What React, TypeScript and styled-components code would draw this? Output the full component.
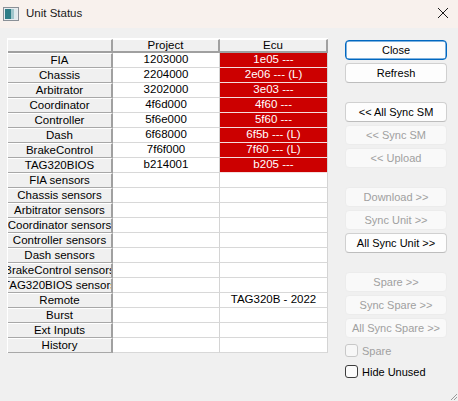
import React from "react";
import styled, { createGlobalStyle, css } from "styled-components";

const GlobalStyle = createGlobalStyle`
  html, body {
    margin: 0;
    padding: 0;
    background: #f0f0f0;
  }
  * {
    box-sizing: border-box;
  }
`;

type Row = {
  label: string;
  project?: string;
  ecu?: string;
  alert?: boolean;
};

const rows: Row[] = [
  { label: "FIA", project: "1203000", ecu: "1e05 ---", alert: true },
  { label: "Chassis", project: "2204000", ecu: "2e06 --- (L)", alert: true },
  { label: "Arbitrator", project: "3202000", ecu: "3e03 ---", alert: true },
  { label: "Coordinator", project: "4f6d000", ecu: "4f60 ---", alert: true },
  { label: "Controller", project: "5f6e000", ecu: "5f60 ---", alert: true },
  { label: "Dash", project: "6f68000", ecu: "6f5b --- (L)", alert: true },
  { label: "BrakeControl", project: "7f6f000", ecu: "7f60 --- (L)", alert: true },
  { label: "TAG320BIOS", project: "b214001", ecu: "b205 ---", alert: true },
  { label: "FIA sensors" },
  { label: "Chassis sensors" },
  { label: "Arbitrator sensors" },
  { label: "Coordinator sensors" },
  { label: "Controller sensors" },
  { label: "Dash sensors" },
  { label: "BrakeControl sensors" },
  { label: "TAG320BIOS sensors" },
  { label: "Remote", ecu: "TAG320B - 2022" },
  { label: "Burst" },
  { label: "Ext Inputs" },
  { label: "History" },
];

type Btn = { text: string; disabled?: boolean; primary?: boolean };

const groups: Btn[][] = [
  [{ text: "Close", primary: true }, { text: "Refresh" }],
  [
    { text: "<< All Sync SM" },
    { text: "<< Sync SM", disabled: true },
    { text: "<< Upload", disabled: true },
  ],
  [
    { text: "Download >>", disabled: true },
    { text: "Sync Unit >>", disabled: true },
    { text: "All Sync Unit >>" },
  ],
  [
    { text: "Spare >>", disabled: true },
    { text: "Sync Spare >>", disabled: true },
    { text: "All Sync Spare >>", disabled: true },
  ],
];

export default function App() {
  return (
    <>
      <GlobalStyle />
      <Window>
        <TitleBar>
          <AppIcon width="16" height="14" viewBox="0 0 16 14">
            <rect x="0.5" y="0.5" width="15" height="13" fill="#e8ecef" stroke="#8a9097" />
            <rect x="2" y="2" width="6" height="10" fill="#2f7d86" />
            <rect x="8" y="2" width="3" height="10" fill="#9fc6cc" />
            <rect x="11" y="2" width="3" height="10" fill="#dfe9ec" />
          </AppIcon>
          <Title>Unit Status</Title>
          <CloseGlyph width="14" height="14" viewBox="0 0 14 14">
            <path d="M2 2 L12 12 M12 2 L2 12" stroke="#1a1a1a" strokeWidth="1" />
          </CloseGlyph>
        </TitleBar>
        <Body>
          <Grid>
            <HeadCell />
            <HeadCell>Project</HeadCell>
            <HeadCell>Ecu</HeadCell>
            {rows.map((r) => (
              <React.Fragment key={r.label}>
                <LabelCell>
                  <span>{r.label}</span>
                </LabelCell>
                <DataCell>{r.project}</DataCell>
                <DataCell $alert={r.alert}>{r.ecu}</DataCell>
              </React.Fragment>
            ))}
          </Grid>
          <Side>
            {groups.map((g, i) => (
              <Group key={i}>
                {g.map((b) => (
                  <Button key={b.text} $primary={b.primary} disabled={b.disabled}>
                    {b.text}
                  </Button>
                ))}
              </Group>
            ))}
            <Checks>
              <Check $disabled>
                <Box $disabled />
                Spare
              </Check>
              <Check>
                <Box />
                Hide Unused
              </Check>
            </Checks>
          </Side>
        </Body>
        <Grip width="10" height="10" viewBox="0 0 10 10">
          <path d="M9 3 L3 9 M9 6 L6 9" stroke="#9a9a9a" strokeWidth="1" />
        </Grip>
      </Window>
    </>
  );
}

const Window = styled.div`
  position: relative;
  width: 458px;
  height: 401px;
  background: #f0f0f0;
  overflow: hidden;
  font-family: "Liberation Sans", Arial, sans-serif;
`;

const TitleBar = styled.div`
  height: 28px;
  display: flex;
  align-items: center;
  padding: 0 8px 0 3px;
  background: #f8f1ed;
`;

const AppIcon = styled.svg`
  flex: none;
  margin-top: -1px;
`;

const Title = styled.div`
  flex: 1;
  margin-left: 7px;
  font-size: 11.5px;
  color: #1a1a1a;
  margin-top: -2px;
`;

const CloseGlyph = styled.svg`
  flex: none;
  margin-top: -2px;
`;

const Body = styled.div`
  display: flex;
  align-items: flex-start;
  padding: 10px 0 0 7px;
`;

const Grid = styled.div`
  display: grid;
  grid-template-columns: 105px 107px 108px;
  grid-template-rows: 14px repeat(20, 15px);
  border-left: 1px solid #ffffff;
  border-top: 1px solid #ffffff;
  font-size: 11.5px;
  color: #000;
`;

const cellBase = css`
  display: flex;
  align-items: center;
  justify-content: center;
  white-space: nowrap;
  overflow: hidden;
  line-height: 1;
`;

const HeadCell = styled.div`
  ${cellBase};
  background: #f0f0f0;
  border-right: 2px solid #a0a0a0;
  border-bottom: 2px solid #a0a0a0;
  border-top: 1px solid #ffffff;
`;

const LabelCell = styled.div`
  ${cellBase};
  background: #f0f0f0;
  border-right: 2px solid #a0a0a0;
  border-bottom: 1px solid #a8a8a8;
  border-top: 1px solid #ffffff;

  span {
    flex: none;
  }
`;

const DataCell = styled.div<{ $alert?: boolean }>`
  ${cellBase};
  background: #ffffff;
  border-right: 1px solid #d4d4d4;
  border-bottom: 1px solid #d8d8d8;

  ${(p) =>
    p.$alert &&
    css`
      background: #cc0000;
      color: #ffffff;
      border-bottom: 1px solid #f4dede;
      border-right: 1px solid #d4d4d4;
    `}
`;

const Side = styled.div`
  display: flex;
  flex-direction: column;
  gap: 19px;
  margin-left: 17px;
  margin-top: 2px;
  width: 102px;
`;

const Group = styled.div`
  display: flex;
  flex-direction: column;
  gap: 3px;
`;

const Button = styled.button<{ $primary?: boolean }>`
  height: 20px;
  width: 102px;
  padding: 0;
  font-family: "Liberation Sans", Arial, sans-serif;
  font-size: 11px;
  color: #000000;
  background: #fdfdfd;
  border: 1px solid #d0d0d0;
  border-bottom-color: #bdbdbd;
  border-radius: 4px;

  ${(p) =>
    p.$primary &&
    css`
      border: 1px solid #0067c0;
      box-shadow: inset 0 0 0 0.5px #0067c0;
    `}

  &:disabled {
    color: #a0a0a0;
    background: #f9f9f9;
    border-color: #ececec;
  }
`;

const Checks = styled.div`
  display: flex;
  flex-direction: column;
  gap: 8px;
  margin-top: -13px;
`;

const Check = styled.label<{ $disabled?: boolean }>`
  display: flex;
  align-items: center;
  gap: 4px;
  height: 13px;
  font-size: 11px;
  color: ${(p) => (p.$disabled ? "#a0a0a0" : "#000000")};
`;

const Box = styled.span<{ $disabled?: boolean }>`
  flex: none;
  width: 13px;
  height: 13px;
  border-radius: 3px;
  background: ${(p) => (p.$disabled ? "#f7f7f7" : "#fbfbfb")};
  border: 1px solid ${(p) => (p.$disabled ? "#c8c8c8" : "#3c3c3c")};
`;

const Grip = styled.svg`
  position: absolute;
  right: 0;
  bottom: 0;
`;
